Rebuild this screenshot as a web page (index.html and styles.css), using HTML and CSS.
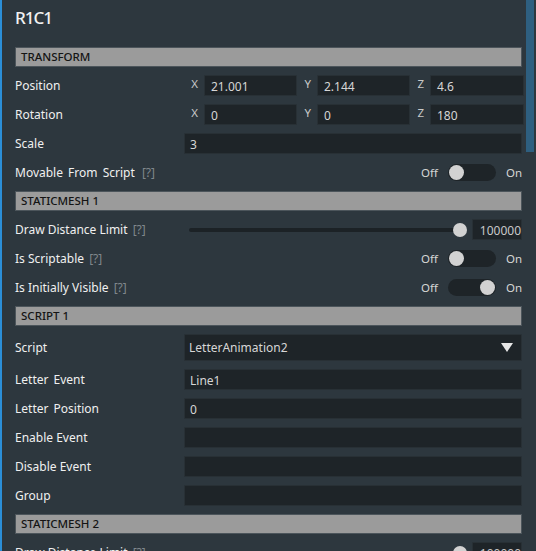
FILE: index.html
```html
<!DOCTYPE html>
<html>
<head>
<meta charset="utf-8">
<link rel="stylesheet" href="styles.css">
</head>
<body>
<div class="panel">
  <div class="title">R1C1</div>

  <div class="section">TRANSFORM</div>
  <div class="row">
    <div class="label">Position</div>
    <div class="value xyz">
      <span class="axis">X</span><div class="input">21.001</div>
      <span class="axis">Y</span><div class="input">2.144</div>
      <span class="axis">Z</span><div class="input">4.6</div>
    </div>
  </div>
  <div class="row">
    <div class="label">Rotation</div>
    <div class="value xyz">
      <span class="axis">X</span><div class="input">0</div>
      <span class="axis">Y</span><div class="input">0</div>
      <span class="axis">Z</span><div class="input">180</div>
    </div>
  </div>
  <div class="row">
    <div class="label">Scale</div>
    <div class="value"><div class="input full">3</div></div>
  </div>
  <div class="row">
    <div class="label wide">Movable From Script <span class="help">[?]</span></div>
    <div class="value toggle-wrap">
      <span class="tl">Off</span><span class="toggle"><span class="knob"></span></span><span class="tl">On</span>
    </div>
  </div>

  <div class="section">STATICMESH 1</div>
  <div class="row">
    <div class="label">Draw Distance Limit <span class="help">[?]</span></div>
    <div class="value slider-wrap">
      <div class="slider"><div class="track"></div><div class="sknob"></div></div>
      <div class="input num">100000</div>
    </div>
  </div>
  <div class="row">
    <div class="label">Is Scriptable <span class="help">[?]</span></div>
    <div class="value toggle-wrap">
      <span class="tl">Off</span><span class="toggle"><span class="knob"></span></span><span class="tl">On</span>
    </div>
  </div>
  <div class="row">
    <div class="label">Is Initially Visible <span class="help">[?]</span></div>
    <div class="value toggle-wrap">
      <span class="tl">Off</span><span class="toggle on"><span class="knob"></span></span><span class="tl">On</span>
    </div>
  </div>

  <div class="section">SCRIPT 1</div>
  <div class="row tall">
    <div class="label">Script</div>
    <div class="value"><div class="input full select">LetterAnimation2<span class="caret"></span></div></div>
  </div>
  <div class="row">
    <div class="label wide">Letter Event</div>
    <div class="value"><div class="input full">Line1</div></div>
  </div>
  <div class="row">
    <div class="label wide">Letter Position</div>
    <div class="value"><div class="input full">0</div></div>
  </div>
  <div class="row">
    <div class="label">Enable Event</div>
    <div class="value"><div class="input full"></div></div>
  </div>
  <div class="row">
    <div class="label">Disable Event</div>
    <div class="value"><div class="input full"></div></div>
  </div>
  <div class="row">
    <div class="label">Group</div>
    <div class="value"><div class="input full"></div></div>
  </div>

  <div class="section">STATICMESH 2</div>
  <div class="row">
    <div class="label">Draw Distance Limit <span class="help">[?]</span></div>
    <div class="value slider-wrap">
      <div class="slider"><div class="track"></div><div class="sknob"></div></div>
      <div class="input num">100000</div>
    </div>
  </div>
</div>
<div class="scrollbar"></div>
</body>
</html>
```
FILE: styles.css
```css
html, body {
  margin: 0;
  padding: 0;
  height: 100%;
  overflow: hidden;
}
body {
  background: #2d373e;
  border-left: 2px solid #2b8fd8;
  font-family: "Noto Sans", "Open Sans", sans-serif;
  color: #e8e8e8;
  position: relative;
  box-sizing: border-box;
}
.panel {
  display: flex;
  flex-direction: column;
  gap: 8px;
  padding: 0 14px 0 13px;
}
.title {
  height: 39px;
  font-size: 17px;
  font-weight: 500;
  line-height: 36px;
  letter-spacing: -1px;
  color: #f2f2f2;
}
.section {
  height: 20px;
  box-sizing: border-box;
  background: #9b9b9b;
  border: 1px solid #4c555b;
  color: #141414;
  font-size: 11.5px;
  font-weight: 500;
  line-height: 18px;
  padding-left: 5px;
}
.row {
  display: flex;
  height: 21px;
  align-items: center;
}
.row.tall { height: 27px; }
.label {
  width: 169px;
  flex: none;
  font-size: 12px;
  color: #f0f0f0;
  white-space: nowrap;
}
.label.wide { word-spacing: 2px; }
.help {
  color: #80878c;
  margin-left: 2px;
}
.value {
  flex: 1;
  display: flex;
  align-items: center;
  height: 100%;
}
.input {
  background: #1e2428;
  border: 1px solid #283035;
  box-sizing: border-box;
  height: 21px;
  font-size: 12px;
  color: #d6d6d6;
  padding: 2px 5px 0;
  line-height: 18px;
  border-radius: 1px;
}
.full { flex: 1; }
.xyz .axis {
  width: 20px;
  flex: none;
  font-size: 11.5px;
  color: #c8c8c8;
  text-align: right;
  padding-right: 6px;
  box-sizing: border-box;
  align-self: flex-start;
  margin-top: 1px;
}
.xyz .input { width: 93px; flex: none; padding-left: 6px; }
.xyz .input:nth-of-type(3) { width: 94px; }
.toggle-wrap {
  justify-content: flex-end;
}
.tl {
  font-size: 11.5px;
  color: #d6d6d6;
}
.tl:first-child { margin-right: 10px; }
.tl:last-child { margin-left: 10px; width: 16px; }
.toggle {
  width: 48px;
  height: 17px;
  border-radius: 9px;
  background: #1e2428;
  display: flex;
  align-items: center;
  padding: 0 1px;
  box-sizing: border-box;
}
.toggle.on { justify-content: flex-end; }
.knob {
  width: 15px;
  height: 15px;
  border-radius: 50%;
  background: #d2d2d2;
}
.slider-wrap { gap: 5px; }
.slider {
  flex: 1;
  position: relative;
  height: 16px;
  margin-left: 5px;
  display: flex;
  align-items: center;
}
.track {
  flex: 1;
  height: 4px;
  background: #1c2226;
  border-radius: 2px;
  margin-right: 7px;
}
.sknob {
  position: absolute;
  right: 0;
  top: 1px;
  width: 14px;
  height: 14px;
  border-radius: 50%;
  background: #d2d2d2;
}
.num {
  width: 50px;
  flex: none;
  text-align: right;
  padding: 2px 0 0 0;
  color: #c8c8c8;
}
.select {
  height: 27px;
  display: flex;
  align-items: center;
  justify-content: space-between;
  padding: 0 8px 0 4px;
}
.caret {
  width: 0;
  height: 0;
  border-left: 6px solid transparent;
  border-right: 6px solid transparent;
  border-top: 9px solid #e6e6e6;
}
.scrollbar {
  position: absolute;
  right: 2px;
  top: 0;
  width: 8px;
  height: 152px;
  background: #2e5f80;
}
```
